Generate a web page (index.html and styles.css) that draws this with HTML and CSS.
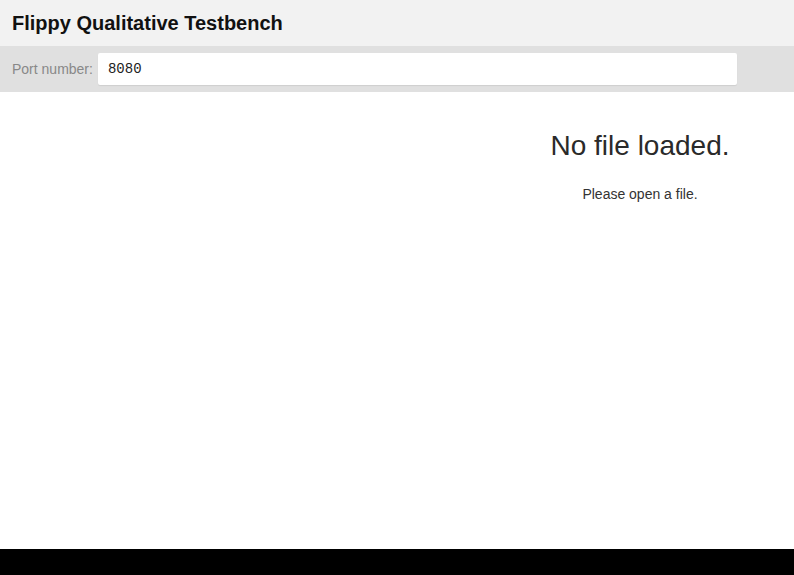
FILE: index.html
```html
<!DOCTYPE html>
<html>
<head>
<meta charset="utf-8">
<title>Flippy Qualitative Testbench</title>
<link rel="stylesheet" href="styles.css">
</head>
<body>
<div class="app">
  <header class="header"><h1 class="title">Flippy Qualitative Testbench</h1></header>
  <div class="toolbar">
    <label class="port-label" for="port">Port number:</label>
    <input class="port-input" id="port" type="text" value="8080">
  </div>
  <main class="main">
    <div class="left-pane"></div>
    <div class="right-pane">
      <h2 class="empty-title">No file loaded.</h2>
      <p class="empty-text">Please open a file.</p>
    </div>
  </main>
  <footer class="footer"></footer>
</div>
</body>
</html>
```
FILE: styles.css
```css
html, body {
  margin: 0;
  padding: 0;
  height: 100%;
}
body {
  font-family: "Liberation Sans", Arial, sans-serif;
  color: #333;
  background: #fff;
}
.app {
  display: flex;
  flex-direction: column;
  height: 100vh;
}
.header {
  height: 46px;
  background: #f2f2f2;
  display: flex;
  align-items: center;
  padding: 0 12px;
  box-sizing: border-box;
}
.title {
  margin: 0;
  font-size: 20px;
  font-weight: bold;
  color: #111;
}
.toolbar {
  height: 46px;
  background: #e0e0e0;
  display: flex;
  align-items: center;
  padding: 0 12px;
  box-sizing: border-box;
}
.port-label {
  font-size: 14px;
  color: #888;
  margin-right: 5px;
}
.port-input {
  width: 639px;
  height: 32px;
  box-sizing: border-box;
  border: none;
  border-radius: 2px;
  background: #fff;
  box-shadow: 0 1px 1px rgba(0,0,0,0.08);
  padding: 0 10px;
  font-family: "Liberation Mono", "DejaVu Sans Mono", monospace;
  font-size: 14px;
  color: #222;
  outline: none;
}
.main {
  flex: 1;
  display: flex;
}
.left-pane {
  flex: 1;
}
.right-pane {
  width: 308px;
  text-align: center;
  padding-top: 38px;
}
.empty-title {
  margin: 0;
  font-size: 28px;
  font-weight: normal;
  color: #2a2a2a;
}
.empty-text {
  margin: 24px 0 0;
  font-size: 14px;
  color: #333;
}
.footer {
  height: 26px;
  background: #000;
}
```
